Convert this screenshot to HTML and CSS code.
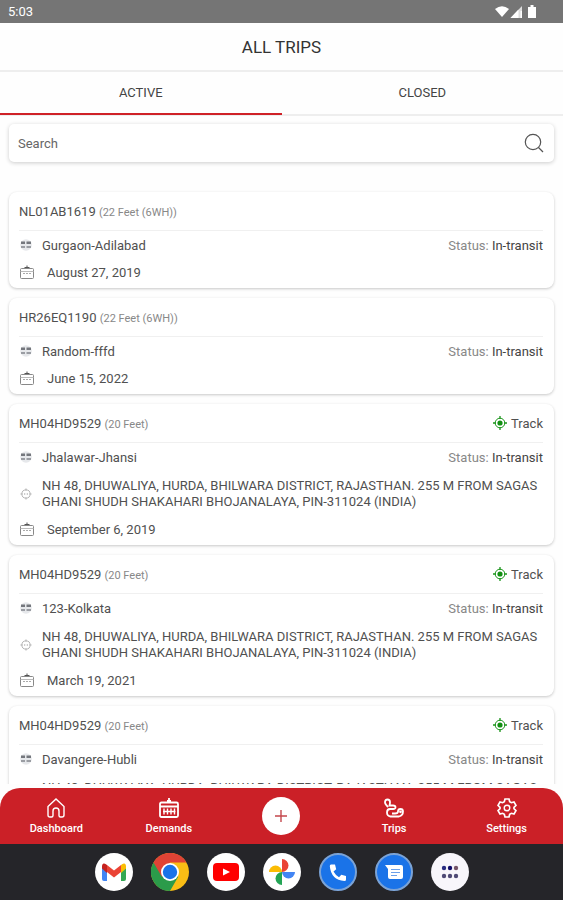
FILE: index.html
```html
<!DOCTYPE html>
<html lang="en">
<head>
  <meta charset="UTF-8">
  <meta name="viewport" content="width=device-width, initial-scale=1.0">
  <title>All Trips</title>
  <link rel="stylesheet" href="styles.css">
</head>
<body>

  <!-- Shared icons -->
  <svg class="sprite" aria-hidden="true">
    <symbol id="icon-route" viewBox="0 0 12 12">
      <circle cx="6" cy="6" r="5.8" fill="#e6e8eb"/>
      <path d="M1 2.500h4v2.500H1zM6.500 2.500h4.500v2.500H6.500z" fill="#74777d"/>
      <path d="M1 8h4M6.500 8H11" stroke="#9a9da3" stroke-width="2" fill="none"/>
    </symbol>
    <symbol id="icon-date" viewBox="0 0 16 16">
      <rect x="1.500" y="4.500" width="13" height="10" rx="1" fill="none" stroke="#888"/>
      <path d="M1.500 7.500h13" stroke="#bbb" fill="none"/>
      <path d="M4 9.500h8" stroke="#aaa" stroke-dasharray="2 1" fill="none"/>
      <path d="M8 1.500V4M5.500 3.500h5" stroke="#555" fill="none"/>
    </symbol>
    <symbol id="icon-place" viewBox="0 0 14 14">
      <circle cx="7" cy="7" r="4.800" fill="none" stroke="#aaa"/>
      <path d="M7 .5v2.500M7 11v2.500M.5 7h2.500M11 7h2.500M5.500 6v2M8.500 6v2" stroke="#aaa" fill="none"/>
    </symbol>
    <symbol id="icon-track" viewBox="0 0 14 14">
      <circle cx="7" cy="7" r="4.800" fill="none" stroke="#1b951b"/>
      <path d="M7 0v3M7 11v3M0 7h3M11 7h3" stroke="#1b951b" stroke-width="1.300" fill="none"/>
      <circle cx="7" cy="7" r="2.600" fill="#129012"/>
    </symbol>
  </svg>

  <div class="status-bar">
    <span>5:03</span>
    <svg class="status-icons" viewBox="0 0 44 14" aria-hidden="true">
      <path d="M0 4q7-5.500 14 0L7 12z" fill="#fff"/>
      <path d="M15.500 13L27 1v12z" fill="#ddd"/>
      <path d="M15.500 13L23.500 4.500V13zM25.500 6h1.500v7h-1.500z" fill="#fff"/>
      <path d="M33 2h2.500V0h3v2H41v11h-8z" fill="#fff"/>
    </svg>
  </div>

  <header class="header">
    <h1>ALL TRIPS</h1>
  </header>

  <div class="tabs">
    <button class="tab active" type="button">ACTIVE</button>
    <button class="tab" type="button">CLOSED</button>
  </div>

  <form class="search">
    <input type="text" placeholder="Search" aria-label="Search">
    <button type="button" aria-label="Search trips">
      <svg viewBox="0 0 20 20" fill="none" stroke="#555" stroke-width="1.200">
        <circle cx="9" cy="9" r="7.700"/>
        <path d="M14.500 14.500L19 19"/>
      </svg>
    </button>
  </form>

  <!-- Trip list -->
  <main class="trips">
    <article class="card">
      <div class="card-head">
        <h2>NL01AB1619 <small>(22 Feet (6WH))</small></h2>
      </div>
      <div class="route">
        <svg class="icon-small"><use href="#icon-route"/></svg>
        <span>Gurgaon-Adilabad</span>
        <span class="status">Status: <b>In-transit</b></span>
      </div>
      <div class="date">
        <svg class="icon-date"><use href="#icon-date"/></svg>
        <span>August 27, 2019</span>
      </div>
    </article>

    <article class="card">
      <div class="card-head">
        <h2>HR26EQ1190 <small>(22 Feet (6WH))</small></h2>
      </div>
      <div class="route">
        <svg class="icon-small"><use href="#icon-route"/></svg>
        <span>Random-fffd</span>
        <span class="status">Status: <b>In-transit</b></span>
      </div>
      <div class="date">
        <svg class="icon-date"><use href="#icon-date"/></svg>
        <span>June 15, 2022</span>
      </div>
    </article>

    <article class="card">
      <div class="card-head">
        <h2>MH04HD9529 <small>(20 Feet)</small></h2>
        <a class="track" href="#"><svg><use href="#icon-track"/></svg>Track</a>
      </div>
      <div class="route">
        <svg class="icon-small"><use href="#icon-route"/></svg>
        <span>Jhalawar-Jhansi</span>
        <span class="status">Status: <b>In-transit</b></span>
      </div>
      <div class="place">
        <svg class="icon-small"><use href="#icon-place"/></svg>
        <p>NH 48, DHUWALIYA, HURDA, BHILWARA DISTRICT, RAJASTHAN. 255 M FROM SAGAS<br>GHANI SHUDH SHAKAHARI BHOJANALAYA, PIN-311024 (INDIA)</p>
      </div>
      <div class="date">
        <svg class="icon-date"><use href="#icon-date"/></svg>
        <span>September 6, 2019</span>
      </div>
    </article>

    <article class="card">
      <div class="card-head">
        <h2>MH04HD9529 <small>(20 Feet)</small></h2>
        <a class="track" href="#"><svg><use href="#icon-track"/></svg>Track</a>
      </div>
      <div class="route">
        <svg class="icon-small"><use href="#icon-route"/></svg>
        <span>123-Kolkata</span>
        <span class="status">Status: <b>In-transit</b></span>
      </div>
      <div class="place">
        <svg class="icon-small"><use href="#icon-place"/></svg>
        <p>NH 48, DHUWALIYA, HURDA, BHILWARA DISTRICT, RAJASTHAN. 255 M FROM SAGAS<br>GHANI SHUDH SHAKAHARI BHOJANALAYA, PIN-311024 (INDIA)</p>
      </div>
      <div class="date">
        <svg class="icon-date"><use href="#icon-date"/></svg>
        <span>March 19, 2021</span>
      </div>
    </article>

    <article class="card">
      <div class="card-head">
        <h2>MH04HD9529 <small>(20 Feet)</small></h2>
        <a class="track" href="#"><svg><use href="#icon-track"/></svg>Track</a>
      </div>
      <div class="route">
        <svg class="icon-small"><use href="#icon-route"/></svg>
        <span>Davangere-Hubli</span>
        <span class="status">Status: <b>In-transit</b></span>
      </div>
      <div class="place">
        <svg class="icon-small"><use href="#icon-place"/></svg>
        <p>NH 48, DHUWALIYA, HURDA, BHILWARA DISTRICT, RAJASTHAN. 255 M FROM SAGAS<br>GHANI SHUDH SHAKAHARI BHOJANALAYA, PIN-311024 (INDIA)</p>
      </div>
    </article>
  </main>

  <!-- App navigation -->
  <nav class="nav">
    <a href="#">
      <svg viewBox="0 0 20 20"><path d="M2 8.500L10 1l8 7.500V17q0 2-2 2h-1.500q-1.500 0-1.500-1.500V13q0-3-3-3t-3 3v4.500Q7 19 5.500 19H4q-2 0-2-2z"/></svg>
      Dashboard
    </a>
    <a href="#">
      <svg viewBox="0 0 20 20"><path d="M1 6q0-1.500 1.500-1.500h15Q19 4.500 19 6v11.500q0 1.500-1.500 1.500h-15Q1 19 1 17.500zM1 8.500h18M10 0v4.500M8 3h4" stroke-width="1.800"/><path d="M5 10.500v6M8.500 10.500v6M12 10.500v6M15.500 10.500v6M4 13.500h12.500"/></svg>
      Demands
    </a>
    <a class="add" href="#" aria-label="Add trip">
      <svg viewBox="0 0 20 20"><path d="M10 4v12M4 10h12"/></svg>
    </a>
    <a href="#">
      <svg viewBox="0 0 20 20"><path d="M4 9Q1 6 1 4.200 1 1.500 3.500 1.500T6 4.200Q6 5.500 5.500 7.500H9q2.500 0 2.500 1.800T9 11H6q-3 0-3 3.500T6.500 18.500H15q4-1 4-5 0-2.500-2.500-2.500T14 13.500q0 2-3 2H8" stroke-width="1.800"/><circle cx="16.500" cy="13.800" r=".7"/></svg>
      Trips
    </a>
    <a href="#">
      <svg viewBox="0 0 20 20"><path d="M8 1h4l.7 2.700 1.700 1L17 4l2 3.400-2 1.900v1.400l2 1.900-2 3.400-2.600-.7-1.700 1L12 19H8l-.7-2.700-1.700-1L3 16l-2-3.400 2-1.900V9.300L1 7.400 3 4l2.600.7 1.700-1z" stroke-width="1.700"/><circle cx="10" cy="10" r="2.800"/></svg>
      Settings
    </a>
  </nav>

  <!-- Device dock -->
  <footer class="dock">
    <a href="#" aria-label="Gmail">
      <svg viewBox="0 0 38 38">
        <circle cx="19" cy="19" r="19" fill="#fff"/>
        <path d="M7 14h5v14H9q-2 0-2-2z" fill="#4285f4"/>
        <path d="M26 14h5v12q0 2-2 2h-3z" fill="#34a853"/>
        <path d="M26 12q2-2 3.500-1.500T31 13v2.500L26 20z" fill="#fbbc04"/>
        <path d="M12 12l7 5.500 7-5.500v7l-7 5.500-7-5.500z" fill="#ea4335"/>
        <path d="M12 12q-2-2-3.500-1.500T7 13v2.500l5 4.500z" fill="#c5221f"/>
      </svg>
    </a>
    <a href="#" aria-label="Chrome">
      <svg viewBox="0 0 38 38">
        <circle cx="19" cy="19" r="19" fill="#f9bd15"/>
        <path d="M19 19L2.500 9.500A19 19 0 0 0 19 38l8.200-14.300z" fill="#2b9b4a"/>
        <path d="M2.500 9.500A19 19 0 0 1 35.500 9.500H19L10.800 23.700z" fill="#df4335"/>
        <circle cx="19" cy="19" r="9" fill="#fff"/>
        <circle cx="19" cy="19" r="7.200" fill="#1a73e8"/>
      </svg>
    </a>
    <a href="#" aria-label="YouTube">
      <svg viewBox="0 0 38 38">
        <circle cx="19" cy="19" r="19" fill="#fff"/>
        <rect x="6" y="10" width="26" height="18" rx="4" fill="#f00"/>
        <path d="M16 15.500l7 3.500-7 3.500z" fill="#fff"/>
      </svg>
    </a>
    <a href="#" aria-label="Photos">
      <svg viewBox="0 0 38 38">
        <circle cx="19" cy="19" r="19" fill="#fff"/>
        <path d="M19 6a6.500 6.500 0 0 1 0 13z" fill="#ea4335"/>
        <path d="M32 19a6.500 6.500 0 0 1-13 0z" fill="#4285f4"/>
        <path d="M19 32a6.500 6.500 0 0 1 0-13z" fill="#23a455"/>
        <path d="M6 19a6.500 6.500 0 0 1 13 0z" fill="#fbbc04"/>
      </svg>
    </a>
    <a href="#" aria-label="Phone">
      <svg viewBox="0 0 38 38">
        <circle cx="19" cy="19" r="18" fill="#1a73e8" stroke="#7ba3d6" stroke-width="2"/>
        <path d="M12 11.500h4l1.200 4.800-2.700 2.200q2.200 4 5.500 5.700l2.300-2.500 4.700 1.300v3.500q0 1.500-1.500 1.500Q12 27 10.800 13q0-1.500 1.200-1.500z" fill="#fff"/>
      </svg>
    </a>
    <a href="#" aria-label="Messages">
      <svg viewBox="0 0 38 38">
        <circle cx="19" cy="19" r="18" fill="#1a73e8" stroke="#7ba3d6" stroke-width="2"/>
        <path d="M10 12h16q2 0 2 2v10q0 2-2 2H15q-2 0-2-2v-8z" fill="#fff"/>
        <path d="M16 16.500h9M16 19.500h9M16 22.500h6" stroke="#6ba0ea" stroke-width="1.200"/>
      </svg>
    </a>
    <a href="#" aria-label="All apps">
      <svg viewBox="0 0 38 38">
        <circle cx="19" cy="19" r="19" fill="#f8f6fb"/>
        <g fill="#4f4a76">
          <circle cx="13" cy="15" r="2.200" fill="#282c80"/>
          <circle cx="19" cy="15" r="2.200" fill="#100c6a"/>
          <circle cx="25" cy="15" r="2.200" fill="#755468"/>
          <circle cx="13" cy="23" r="2.200"/>
          <circle cx="19" cy="23" r="2.200"/>
          <circle cx="25" cy="23" r="2.200"/>
        </g>
      </svg>
    </a>
  </footer>

</body>
</html>
```
FILE: styles.css
```css
* {
  box-sizing: border-box;
}

body {
  display: flex;
  flex-direction: column;
  height: 100vh;
  margin: 0;
  overflow: hidden;
  background-color: #fefefe;
  font-family: Roboto, sans-serif;
  font-size: 13px;
  color: #505050;
}

a {
  color: inherit;
  text-decoration: none;
}

button {
  border: none;
  padding: 0;
  background: none;
  font: inherit;
  color: inherit;
  cursor: pointer;
}

.sprite {
  display: none;
}

/* Status bar */
.status-bar {
  display: flex;
  flex: none;
  justify-content: space-between;
  align-items: center;
  height: 23px;
  padding: 0 24px 0 8px;
  background-color: #757575;
  color: #fff;
}

.status-icons {
  width: 44px;
  height: 14px;
}

/* Title and tabs */
.header {
  display: flex;
  flex: none;
  justify-content: center;
  align-items: center;
  height: 49px;
  border-bottom: 2px solid #eee;
}

.header h1 {
  margin: 0;
  font-size: 17px;
  font-weight: 400;
  color: #333;
}

.tabs {
  display: flex;
  flex: none;
  height: 44px;
  border-bottom: 2px solid #eee;
}

.tab {
  flex: 1;
  height: 43px;
  border-bottom: 2px solid transparent;
  color: #444;
}

.tab.active {
  border-bottom-color: #cf2127;
}

/* Search box */
.search {
  display: flex;
  flex: none;
  align-items: center;
  height: 38px;
  margin: 8px 9px 20px;
  padding: 0 10px 0 9px;
  border-radius: 5px;
  background-color: #fff;
  box-shadow: 0 1px 4px rgba(0, 0, 0, 0.2);
}

.search input {
  flex: 1;
  min-width: 0;
  border: none;
  padding: 0;
  outline: none;
  background: none;
  font: inherit;
}

.search input::placeholder {
  color: #666;
}

.search svg {
  display: block;
  width: 20px;
  height: 20px;
}

/* Trip cards */
.trips {
  display: flex;
  flex: 1;
  flex-direction: column;
  gap: 10px;
  min-height: 0;
  margin-bottom: 4px;
  padding: 10px 9px;
  overflow: hidden;
}

.card {
  flex: none;
  padding: 0 11px 3px 10px;
  border-radius: 8px;
  background-color: #fff;
  box-shadow: 0 1px 3px rgba(0, 0, 0, 0.22);
}

.card-head {
  display: flex;
  justify-content: space-between;
  align-items: center;
  height: 39px;
  border-bottom: 1px solid #f0f0f0;
}

.card-head h2 {
  margin: 0;
  font-size: 13px;
  font-weight: 400;
}

.card-head small {
  font-size: 11px;
  color: #888;
}

.track {
  display: flex;
  align-items: center;
  gap: 4px;
}

.track svg {
  width: 14px;
  height: 14px;
}

.route,
.place,
.date {
  display: flex;
  align-items: center;
}

.route {
  gap: 9px;
  height: 28px;
}

.place {
  gap: 9px;
  height: 45px;
}

.place p {
  margin: 0;
  line-height: 16px;
  white-space: nowrap;
}

.date {
  gap: 12px;
  height: 26px;
}

.icon-small {
  flex: none;
  width: 14px;
  height: 12px;
}

.icon-date {
  width: 16px;
  height: 16px;
}

.status {
  margin-left: auto;
  color: #888;
}

.status b {
  font-weight: 400;
  color: #444;
}

/* Bottom navigation */
.nav {
  display: flex;
  flex: none;
  align-items: center;
  height: 56px;
  border-radius: 20px 20px 0 0;
  background-color: #cb2027;
  font-size: 11px;
  font-weight: 500;
  color: #fff;
}

.nav a {
  display: flex;
  flex: 1;
  flex-direction: column;
  align-items: center;
  gap: 4px;
}

.nav svg {
  width: 20px;
  height: 20px;
  fill: none;
  stroke: #fff;
  stroke-width: 1.4;
}

.nav .add svg {
  width: 38px;
  height: 38px;
  padding: 9px;
  border-radius: 50%;
  background-color: #fff;
  stroke: #c4474c;
}

/* Dock */
.dock {
  display: flex;
  flex: none;
  justify-content: center;
  align-items: center;
  gap: 18px;
  height: 56px;
  background-color: #252529;
}

.dock svg {
  display: block;
  width: 38px;
  height: 38px;
}
```
